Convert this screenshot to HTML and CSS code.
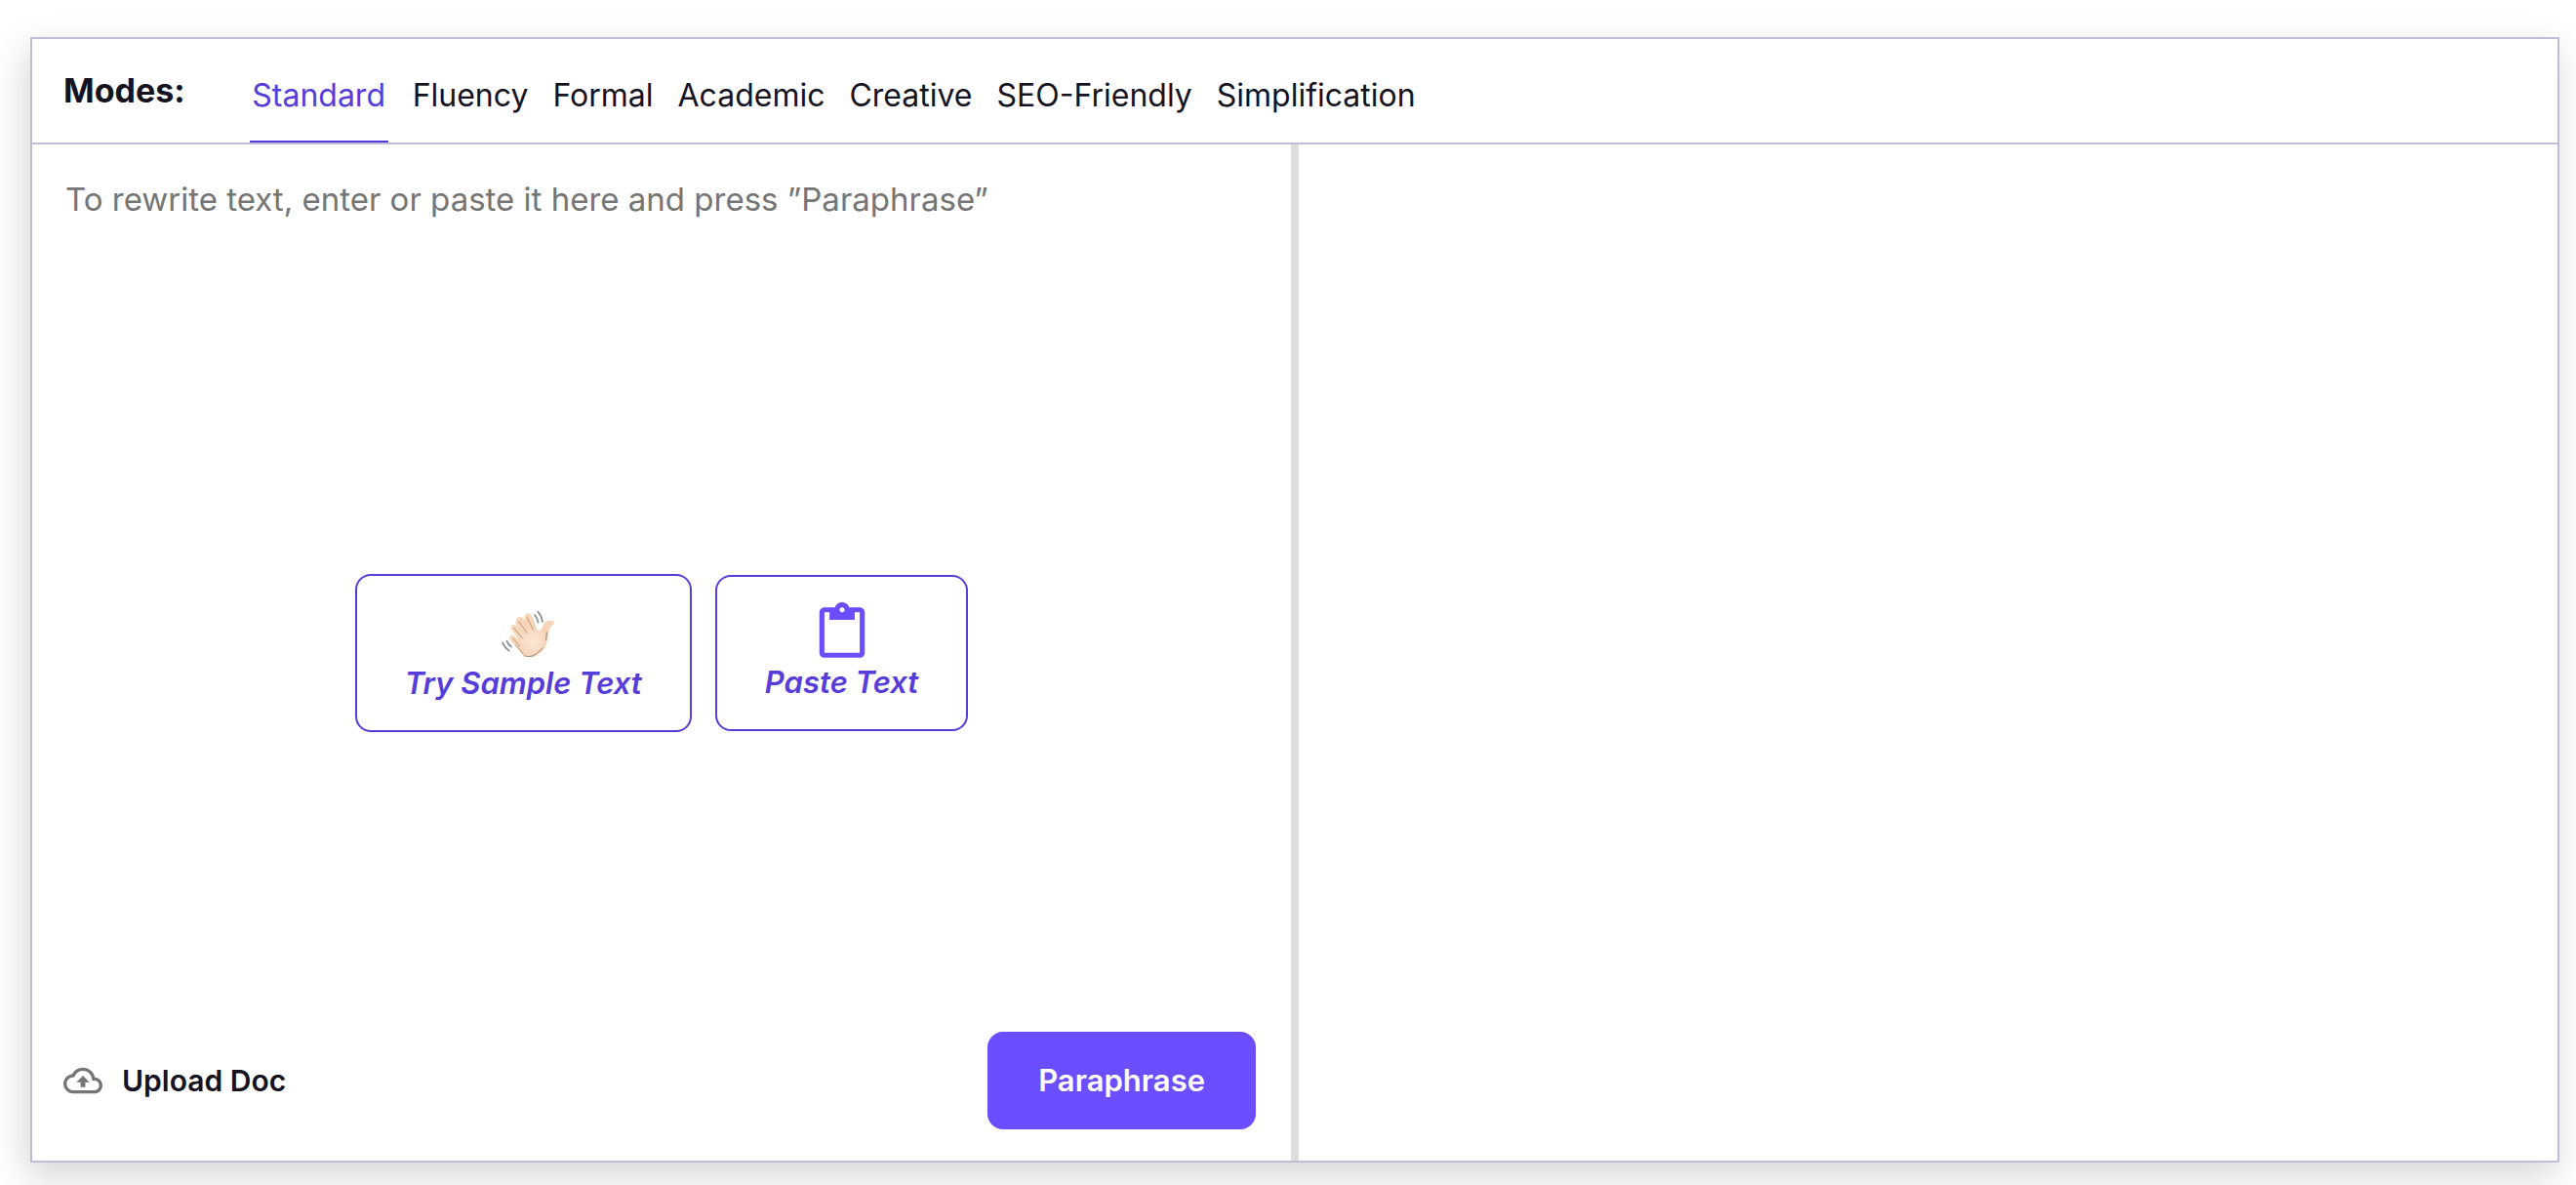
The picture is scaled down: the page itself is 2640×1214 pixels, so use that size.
FILE: index.html
```html
<!DOCTYPE html>
<html lang="en">
<head>
<meta charset="utf-8">
<meta name="viewport" content="width=device-width, initial-scale=1">
<title>Paraphraser</title>
<link rel="stylesheet" href="styles.css">
</head>
<body>
<main class="card">
  <header class="modes">
    <h1 class="modes-title">Modes:</h1>
    <nav class="tabs" aria-label="Modes">
      <button type="button" class="tab tab-active" aria-current="true">Standard</button>
      <button type="button" class="tab">Fluency</button>
      <button type="button" class="tab">Formal</button>
      <button type="button" class="tab">Academic</button>
      <button type="button" class="tab">Creative</button>
      <button type="button" class="tab">SEO-Friendly</button>
      <button type="button" class="tab">Simplification</button>
    </nav>
  </header>
  <div class="panels">
    <section class="panel panel-input">
      <textarea class="editor" aria-label="Text to paraphrase" placeholder="To rewrite text, enter or paste it here and press ”Paraphrase”"></textarea>
      <div class="starters">
        <button type="button" class="starter starter-sample">
          <svg class="icon-hand" viewBox="69 70 195 150" aria-hidden="true">
            <defs>
              <radialGradient id="palm" gradientUnits="userSpaceOnUse" cx="196" cy="168" r="46">
                <stop offset="0" stop-color="#fbe8d8"/>
                <stop offset="1" stop-color="#f6d5b9"/>
              </radialGradient>
            </defs>
            <path d="M124 161c-1-7 4-12 10-11 4 1 8 6 14 11l2-1c-8-11-18-22-22-31-2-8 5-14 13-10l7 6c-5-8-7-18-3-24 5-8 15-9 21-2l4 5c-1-10 1-19 8-21 8-2 14 5 17 13 5 13 9 26 14 38 5 3 11 1 14-5 3-7 5-17 13-21 8-4 18-3 26 2 0 7-8 9-12 16-6 9-6 20-8 31-3 24-14 45-36 57-10 6-25 5-35 0-12-7-20-21-30-32-7-8-15-13-17-21z" fill="url(#palm)"/>
            <g fill="none" stroke="#b8977f" stroke-width="3" stroke-linecap="round">
              <path d="M137 128l25 30M153 109l24 34M178 96l18 37M134 160l22 25M142 180l23 27"/>
              <path d="M168 213c14 6 29 2 41-8l18-16M238 141l-2 25" stroke="#9d8778"/>
            </g>
            <g fill="none" stroke="#8b8b94" stroke-width="5" stroke-linecap="round">
              <path d="M201 88c6 7 9 15 11 23M211 78c8 9 12 20 14 31M102 173c4 11 11 19 20 25M115 168c3 8 8 14 14 18"/>
            </g>
          </svg>
          <span>Try Sample Text</span>
        </button>
        <button type="button" class="starter starter-paste">
          <svg class="icon-paste" viewBox="0 0 24 24" aria-hidden="true"><path d="M19 2h-4.180C14.400.84 13.300 0 12 0c-1.300 0-2.400.84-2.820 2H5c-1.100 0-2 .9-2 2v16c0 1.100.9 2 2 2h14c1.100 0 2-.9 2-2V4c0-1.100-.9-2-2-2zm-7 0c.55 0 1 .45 1 1s-.45 1-1 1-1-.45-1-1 .45-1 1-1zm7 18H5V4h2v3h10V4h2v16z"/></svg>
          <span>Paste Text</span>
        </button>
      </div>
      <footer class="actions">
        <button type="button" class="upload">
          <svg class="icon-cloud" viewBox="0 0 24 24" aria-hidden="true"><path d="M19.350 10.040C18.670 6.590 15.640 4 12 4 9.110 4 6.600 5.640 5.350 8.040 2.340 8.360 0 10.910 0 14c0 3.310 2.690 6 6 6h13c2.760 0 5-2.240 5-5 0-2.640-2.050-4.780-4.650-4.960zM19 18H6c-2.210 0-4-1.790-4-4 0-2.050 1.530-3.760 3.560-3.970l1.070-.11.5-.95C8.080 7.140 9.940 6 12 6c2.620 0 4.880 1.860 5.390 4.430l.3 1.500 1.530.11c1.560.1 2.780 1.410 2.780 2.960 0 1.650-1.350 3-3 3z"/><path d="M8 13h2.550v3h2.900v-3H16l-4-4z"/></svg>
          <span>Upload Doc</span>
        </button>
        <button type="submit" class="submit">Paraphrase</button>
      </footer>
    </section>
    <section class="panel panel-output" aria-label="Result"></section>
  </div>
</main>
</body>
</html>
```
FILE: styles.css
```css
* {
  box-sizing: border-box;
}

body {
  margin: 0;
  min-height: 100vh;
  padding: 38px 17px 23px 31px;
  display: flex;
  background: #fff;
  color: #14131f;
  font-family: Inter, "Liberation Sans", sans-serif;
  font-size: 32px;
  line-height: 40px;
}

button {
  margin: 0;
  padding: 0;
  border: 0;
  background: none;
  color: inherit;
  font: inherit;
  cursor: pointer;
}

.card {
  flex: 1;
  min-width: 0;
  display: flex;
  flex-direction: column;
  border: 2px solid #bdbdd7;
  background: #fff;
  box-shadow: -4px 14px 36px rgba(0, 0, 0, 0.17);
}

.modes {
  display: flex;
  align-items: stretch;
  gap: 66px;
  padding: 0 32px;
  border-bottom: 2px solid #bdbdd7;
}

.modes-title {
  margin: 0;
  align-self: center;
  font-size: 34px;
  font-weight: 700;
}

.tabs {
  display: flex;
  gap: 25px;
}

.tab {
  padding: 38px 0 26px;
  border-bottom: 2px solid transparent;
}

.tab-active {
  min-width: 142px;
  border-bottom-color: #563dd9;
  color: #563dd9;
}

.panels {
  flex: 1;
  display: grid;
  grid-template-columns: 1fr 8px 1fr;
}

.panels::before {
  content: "";
  grid-column: 2;
  grid-row: 1;
  background: #dedede;
}

.panel-input {
  grid-column: 1;
  grid-row: 1;
  display: grid;
  grid-template-areas: "stack";
}

.panel-input > * {
  grid-area: stack;
}

.panel-output {
  grid-column: 3;
  grid-row: 1;
}

.editor {
  width: 100%;
  height: 100%;
  padding: 36px 32px 160px 34px;
  border: 0;
  outline: 0;
  resize: none;
  background: transparent;
  color: inherit;
  font: inherit;
  font-size: 33px;
}

.editor::placeholder {
  color: #757575;
  opacity: 1;
}

.starters {
  place-self: center;
  display: flex;
  align-items: center;
  gap: 24px;
}

.starter {
  display: flex;
  flex-direction: column;
  align-items: center;
  padding: 26px 49px 28px;
  border: 2px solid #563dd9;
  border-radius: 16px;
  color: #563dd9;
  font-size: 31px;
  font-style: italic;
  font-weight: 600;
}

.icon-hand {
  width: 65px;
  height: 50px;
  margin: 8px 0 6px;
}

.icon-paste {
  width: 62px;
  height: 62px;
  fill: #6b4eff;
}

.actions {
  align-self: end;
  display: flex;
  align-items: center;
  justify-content: space-between;
  padding: 0 36px 32px 32px;
}

.upload {
  display: flex;
  align-items: center;
  gap: 20px;
  font-size: 30px;
  font-weight: 600;
}

.icon-cloud {
  width: 40px;
  height: 40px;
  fill: #757575;
}

.submit {
  padding: 30px 52px;
  border-radius: 16px;
  background: #6b4eff;
  color: #fff;
  font-size: 31px;
  font-weight: 600;
}
```
